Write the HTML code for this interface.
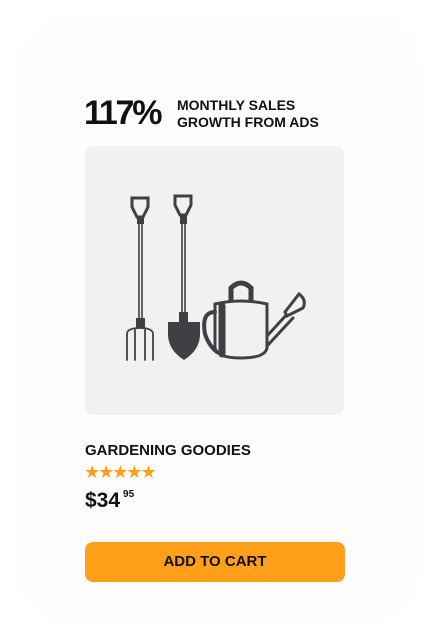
<!DOCTYPE html>
<html><head><meta charset="utf-8"><style>
html,body{margin:0;padding:0;background:#fff;width:443px;height:638px;overflow:hidden;font-family:"Liberation Sans",sans-serif;}
.card{position:absolute;left:19px;top:18px;width:400px;height:601px;background:#fefcfc;border-radius:52px;}
.big{position:absolute;left:84px;top:93px;font-size:34px;font-weight:bold;letter-spacing:-2.2px;color:#111;line-height:40px;}
.sub{position:absolute;left:177px;top:97px;font-size:14px;font-weight:bold;color:#111;line-height:17px;}
.img{position:absolute;left:85px;top:146px;width:259px;height:269px;background:#f0f2f1;border-radius:9px;}
.name{position:absolute;left:85px;top:442px;font-size:15px;font-weight:bold;color:#111;}
.stars{position:absolute;left:84px;top:462px;color:#ff9f1a;font-size:18px;letter-spacing:-2px;line-height:20px;}
.price{position:absolute;left:85px;top:489px;font-size:21px;font-weight:bold;color:#111;}
.price sup{font-size:10px;position:relative;top:-2px;margin-left:3px;}
.btn{position:absolute;left:85px;top:542px;width:260px;height:40px;background:#ff9f1a;border-radius:8px;text-align:center;line-height:40px;font-size:15px;font-weight:bold;color:#111;}
</style></head><body>
<div class="card"></div>
<div class="big">117%</div>
<div class="sub">MONTHLY SALES<br>GROWTH FROM ADS</div>
<div class="img">
<svg width="259" height="269" viewBox="0 0 259 269" fill="none" stroke="#3f4043" stroke-linecap="round">
 <path d="M47 52 h16 v9 l-5 10 h-6 l-5-10z" stroke-width="3"/>
 <rect x="52" y="70" width="7" height="8" fill="#3f4043" stroke="none"/>
 <path d="M54 78 v96 M57 78 v96" stroke-width="1.6"/>
 <rect x="51" y="172" width="9" height="10" fill="#3f4043" stroke="none"/>
 <path d="M42 188 q0-6 13-6 q13 0 13 6 M42 188 v26 M50 184 v30 M60 184 v30 M68 188 v26" stroke-width="1.8"/>
 <path d="M90 50 h16 v9 l-5 10 h-6 l-5-10z" stroke-width="3"/>
 <rect x="95" y="68" width="7" height="10" fill="#3f4043" stroke="none"/>
 <path d="M97 78 v90 M100 78 v90" stroke-width="1.6"/>
 <rect x="94" y="166" width="9" height="12" fill="#3f4043" stroke="none"/>
 <path d="M83 176 h32 v12 q0 16 -16 26 q-16 -10 -16 -26z" fill="#3f4043" stroke="none"/>
 <path d="M146 160 v-18 q10-10 20 0 v18" stroke-width="5"/>
 <path d="M130 158 q26-6 52 0 v44 q-2 10 -26 10 q-24 0 -26 -10z" fill="#f0f2f1" stroke-width="3"/>
 <path d="M130 166 q-14 0 -10 22 q4 12 12 18" stroke-width="4"/>
 <path d="M137 160 v48" stroke-width="7"/>
 <path d="M182 190 l22-24 M182 200 l26-28" stroke-width="3"/>
 <path d="M200 166 l14-18 q8 6 4 14 l-16 8z" fill="#f0f2f1" stroke-width="3"/>
</svg>
</div>
<div class="name">GARDENING GOODIES</div>
<div class="stars">★★★★★</div>
<div class="price">$34<sup>95</sup></div>
<div class="btn">ADD TO CART</div>
</body></html>
